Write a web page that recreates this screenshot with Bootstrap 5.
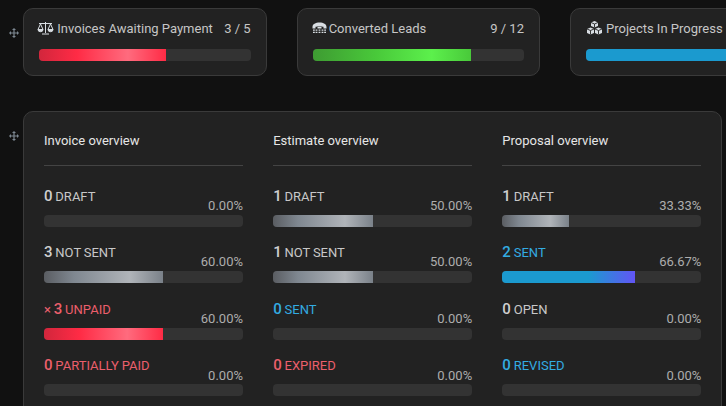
<!DOCTYPE html>
<html lang="en">
<head>
<meta charset="utf-8">
<title>Dashboard</title>
<link rel="stylesheet" href="https://cdn.jsdelivr.net/npm/bootstrap@5.3.0/dist/css/bootstrap.min.css">
<style>
html,body{height:406px;overflow:hidden}
body{background:#111;font-family:Roboto,"Liberation Sans",sans-serif;font-size:13px;color:#c8c8c8;width:726px}
.sheet{width:1000px}
.handle-slot{flex:0 0 23.33px;padding-left:9px}
.handle-slot svg{display:block;width:10px;height:10px}
.top-slot{padding-top:20px}
.panel-slot{padding-top:20px}
.band{padding-top:8px;height:111px}
.kpi{flex:0 0 243.33px;height:68px;background:#222;border:1px solid #3a3a3a;border-radius:10px;padding:11px 15px 0}
.kpi-gap{gap:30px}
.kpi-head{height:18px;line-height:18px;margin-bottom:11px;color:#c6c6c6}
.kpi-head svg{width:17px;height:14px;margin-left:-2px;margin-right:3px;vertical-align:-2px}
.kpi-head svg.tty-icon{width:15px;margin-left:-1px;margin-right:2px}
.kpi-head svg.cubes-icon{margin-left:0;margin-right:3px}
.track{height:12px;background:#333;border-radius:4px}
.fill-red{background:linear-gradient(90deg,#d2263c 0%,#ff2b45 30%,#ff6b7e 70%,#ff2b45 100%)}
.fill-green{background:linear-gradient(90deg,#3e9b32 0%,#49c93a 40%,#5cf04c 75%,#49c93a 100%)}
.fill-blue{background:linear-gradient(90deg,#1b9acf 0%,#1b9acf 65%,#6255f6 100%)}
.fill-cyan{background:#1b9acf}
.fill-gray{background:linear-gradient(90deg,#5a5d62 0%,#7f8790 25%,#b0b4b9 72%,#7a8189 100%)}
.overview{width:698.67px;height:340px;background:#222;border:1px solid #3a3a3a;border-radius:10px;padding:20px 15px 0 19.67px;gap:30.2px}
.ov-col{flex:0 0 199px}
.ov-title{height:18px;line-height:18px;color:#e6e6e6;margin-bottom:15px}
.ov-rule{height:1px;background:#444;margin-bottom:19.8px}
.stat{margin-bottom:15.55px}
.stat-top{height:29px}
.stat-name{line-height:20px;height:20px;text-transform:uppercase;color:#c8c8c8;word-spacing:-.4px}
.stat-name b{font-weight:500;font-size:15px;color:#d0d0d0}
.stat-pct{margin-top:11.1px;line-height:18px;color:#adadad}
.tone-red,.tone-red b{color:#ec5f6c}
.tone-blue,.tone-blue b{color:#33ace2}
.times{font-size:13px}
</style>
</head>
<body>
<div class="sheet">
  <div class="d-flex band">
    <div class="handle-slot top-slot">
      <svg viewBox="0 0 10 10" fill="#7d8791"><path d="M5 0 7 2H5.600V4.400H8V3l2 2-2 2V5.600H5.600V8H7L5 10 3 8h1.400V5.600H2V7L0 5l2-2v1.400h2.400V2H3z"/></svg>
    </div>
    <div class="d-flex kpi-gap">
      <div class="kpi">
        <div class="d-flex justify-content-between kpi-head">
          <span><svg viewBox="0 0 17 14" fill="none" stroke="#d8dde2" stroke-width="1"><path d="M8.500 1v11M5 13h7M2 2.500h13M3.500 3 1 8.500h5zM13.500 3 11 8.500h5z"/><path d="M1 8.500a2.500 2.200 0 0 0 5 0M11 8.500a2.500 2.200 0 0 0 5 0" fill="#d8dde2"/></svg>Invoices Awaiting Payment</span><span>3 / 5</span>
        </div>
        <div class="progress track"><div class="progress-bar fill-red" style="width:60%"></div></div>
      </div>
      <div class="kpi">
        <div class="d-flex justify-content-between kpi-head">
          <span><svg class="tty-icon" viewBox="0 0 15 14" fill="#d8dde2"><path d="M.5 6C.5 3 3.500 1.500 7.500 1.500S14.500 3 14.500 6V7.500h-3V5.800C10 5.300 5 5.300 3.500 5.800V7.500h-3z"/><path d="M5.500 6h4v1.500h-4zM1 8.500h1.800v1.300H1zM3.600 8.500h1.800v1.300H3.600zM6.600 8.500h1.800v1.300H6.600zM9.600 8.500h1.800v1.300H9.600zM12.200 8.500H14v1.300h-1.800zM1 10.800h1.800v1.300H1zM3.600 10.800h1.800v1.300H3.600zM6.600 10.800h1.800v1.300H6.600zM9.600 10.800h1.800v1.300H9.600zM12.200 10.800H14v1.300h-1.800z"/></svg>Converted Leads</span><span>9 / 12</span>
        </div>
        <div class="progress track"><div class="progress-bar fill-green" style="width:75%"></div></div>
      </div>
      <div class="kpi">
        <div class="d-flex justify-content-between kpi-head">
          <span><svg class="cubes-icon" viewBox="0 0 17 14" fill="#d8dde2"><path d="M8.500 0 12 1.500V5L8.500 6.500 5 5V1.500zM4.500 6.500 8 8v4l-3.500 1.500L1 12V8zM12.500 6.500 16 8v4l-3.500 1.500L9 12V8z"/><path d="M5 1.500 8.500 3 12 1.500M8.500 3V6.500M1 8l3.500 1.500L8 8M4.500 9.500V13.500M9 8l3.500 1.500L16 8M12.500 9.500V13.500" fill="none" stroke="#222" stroke-width=".9"/></svg>Projects In Progress</span>
        </div>
        <div class="progress track"><div class="progress-bar fill-cyan" style="width:100%"></div></div>
      </div>
    </div>
  </div>
  <div class="d-flex">
    <div class="handle-slot panel-slot">
      <svg viewBox="0 0 10 10" fill="#7d8791"><path d="M5 0 7 2H5.600V4.400H8V3l2 2-2 2V5.600H5.600V8H7L5 10 3 8h1.400V5.600H2V7L0 5l2-2v1.400h2.400V2H3z"/></svg>
    </div>
    <div class="overview d-flex">
      <div class="ov-col">
        <div class="ov-title">Invoice overview</div>
        <div class="ov-rule"></div>
        <div class="stat">
          <div class="d-flex justify-content-between stat-top"><div class="stat-name"><b>0</b> Draft</div><div class="stat-pct">0.00%</div></div>
          <div class="progress track"><div class="progress-bar fill-gray" style="width:0%"></div></div>
        </div>
        <div class="stat">
          <div class="d-flex justify-content-between stat-top"><div class="stat-name"><b>3</b> Not Sent</div><div class="stat-pct">60.00%</div></div>
          <div class="progress track"><div class="progress-bar fill-gray" style="width:60%"></div></div>
        </div>
        <div class="stat">
          <div class="d-flex justify-content-between stat-top"><div class="stat-name tone-red"><span class="times">×</span> <b>3</b> Unpaid</div><div class="stat-pct">60.00%</div></div>
          <div class="progress track"><div class="progress-bar fill-red" style="width:60%"></div></div>
        </div>
        <div class="stat">
          <div class="d-flex justify-content-between stat-top"><div class="stat-name tone-red"><b>0</b> Partially Paid</div><div class="stat-pct">0.00%</div></div>
          <div class="progress track"><div class="progress-bar fill-red" style="width:0%"></div></div>
        </div>
      </div>
      <div class="ov-col">
        <div class="ov-title">Estimate overview</div>
        <div class="ov-rule"></div>
        <div class="stat">
          <div class="d-flex justify-content-between stat-top"><div class="stat-name"><b>1</b> Draft</div><div class="stat-pct">50.00%</div></div>
          <div class="progress track"><div class="progress-bar fill-gray" style="width:50%"></div></div>
        </div>
        <div class="stat">
          <div class="d-flex justify-content-between stat-top"><div class="stat-name"><b>1</b> Not Sent</div><div class="stat-pct">50.00%</div></div>
          <div class="progress track"><div class="progress-bar fill-gray" style="width:50%"></div></div>
        </div>
        <div class="stat">
          <div class="d-flex justify-content-between stat-top"><div class="stat-name tone-blue"><b>0</b> Sent</div><div class="stat-pct">0.00%</div></div>
          <div class="progress track"><div class="progress-bar fill-blue" style="width:0%"></div></div>
        </div>
        <div class="stat">
          <div class="d-flex justify-content-between stat-top"><div class="stat-name tone-red"><b>0</b> Expired</div><div class="stat-pct">0.00%</div></div>
          <div class="progress track"><div class="progress-bar fill-red" style="width:0%"></div></div>
        </div>
      </div>
      <div class="ov-col">
        <div class="ov-title">Proposal overview</div>
        <div class="ov-rule"></div>
        <div class="stat">
          <div class="d-flex justify-content-between stat-top"><div class="stat-name"><b>1</b> Draft</div><div class="stat-pct">33.33%</div></div>
          <div class="progress track"><div class="progress-bar fill-gray" style="width:33.33%"></div></div>
        </div>
        <div class="stat">
          <div class="d-flex justify-content-between stat-top"><div class="stat-name tone-blue"><b>2</b> Sent</div><div class="stat-pct">66.67%</div></div>
          <div class="progress track"><div class="progress-bar fill-blue" style="width:66.67%"></div></div>
        </div>
        <div class="stat">
          <div class="d-flex justify-content-between stat-top"><div class="stat-name"><b>0</b> Open</div><div class="stat-pct">0.00%</div></div>
          <div class="progress track"><div class="progress-bar fill-gray" style="width:0%"></div></div>
        </div>
        <div class="stat">
          <div class="d-flex justify-content-between stat-top"><div class="stat-name tone-blue"><b>0</b> Revised</div><div class="stat-pct">0.00%</div></div>
          <div class="progress track"><div class="progress-bar fill-blue" style="width:0%"></div></div>
        </div>
      </div>
    </div>
  </div>
</div>
<script src="https://cdn.jsdelivr.net/npm/bootstrap@5.3.0/dist/js/bootstrap.bundle.min.js"></script>
</body>
</html>
